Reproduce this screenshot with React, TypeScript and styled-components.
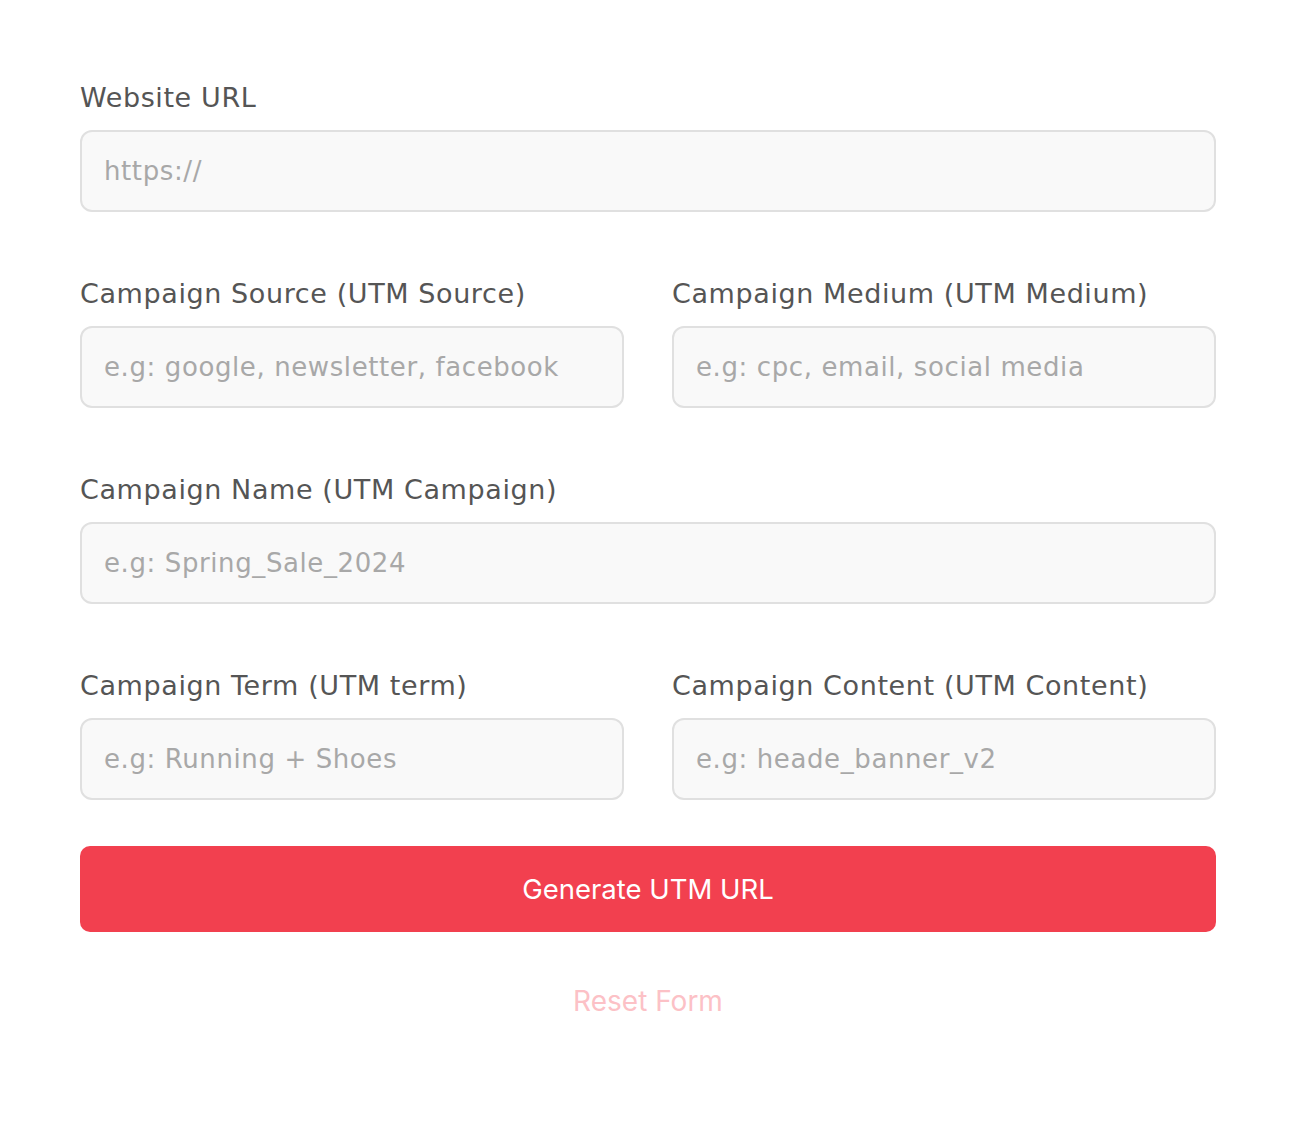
import React from 'react'
import styled, { createGlobalStyle } from 'styled-components'

const GlobalStyle = createGlobalStyle`
  html, body {
    margin: 0;
    padding: 0;
    background: #ffffff;
  }
  * {
    box-sizing: border-box;
  }
`

const Page = styled.main`
  padding: 82px 80px 80px;
  font-family: 'DejaVu Sans', 'Open Sans', sans-serif;
`

const Form = styled.form`
  display: flex;
  flex-direction: column;
  gap: 66px;
`

const Row = styled.div<{ $cols?: number }>`
  display: grid;
  grid-template-columns: repeat(${props => props.$cols || 1}, 1fr);
  column-gap: 48px;
`

const Field = styled.div`
  display: flex;
  flex-direction: column;
  gap: 16px;
`

const Label = styled.label`
  font-size: 27px;
  line-height: 32px;
  color: #555555;
  letter-spacing: 0.6px;
`

const Input = styled.input`
  height: 82px;
  padding: 0 22px;
  border: 2px solid #e0e0e0;
  border-radius: 12px;
  background: #f9f9f9;
  font-family: inherit;
  font-size: 26px;
  letter-spacing: 0.6px;
  color: #333;
  outline: none;

  &::placeholder {
    color: #a8a8a8;
  }
`

const Actions = styled.div`
  display: flex;
  flex-direction: column;
  align-items: center;
  margin-top: -20px;
`

const SubmitButton = styled.button`
  width: 100%;
  height: 86px;
  border: none;
  border-radius: 10px;
  background: #f2404f;
  color: #ffffff;
  font-family: 'Inter', sans-serif;
  font-size: 27.5px;
  cursor: pointer;
`

const ResetButton = styled.button`
  margin-top: 50px;
  border: none;
  background: none;
  color: #fcc1c6;
  font-family: 'Inter', sans-serif;
  font-size: 28px;
  line-height: 36px;
  cursor: pointer;
`

const App: React.FC = () => {
  return (
    <Page>
      <GlobalStyle />
      <Form onSubmit={e => e.preventDefault()}>
        <Row>
          <Field>
            <Label htmlFor='url'>Website URL</Label>
            <Input id='url' placeholder='https://' />
          </Field>
        </Row>

        <Row $cols={2}>
          <Field>
            <Label htmlFor='source'>Campaign Source (UTM Source)</Label>
            <Input id='source' placeholder='e.g: google, newsletter, facebook' />
          </Field>
          <Field>
            <Label htmlFor='medium'>Campaign Medium (UTM Medium)</Label>
            <Input id='medium' placeholder='e.g: cpc, email, social media' />
          </Field>
        </Row>

        <Row>
          <Field>
            <Label htmlFor='campaign'>Campaign Name (UTM Campaign)</Label>
            <Input id='campaign' placeholder='e.g: Spring_Sale_2024' />
          </Field>
        </Row>

        <Row $cols={2}>
          <Field>
            <Label htmlFor='term'>Campaign Term (UTM term)</Label>
            <Input id='term' placeholder='e.g: Running + Shoes' />
          </Field>
          <Field>
            <Label htmlFor='content'>Campaign Content (UTM Content)</Label>
            <Input id='content' placeholder='e.g: heade_banner_v2' />
          </Field>
        </Row>

        <Actions>
          <SubmitButton type='submit'>Generate UTM URL</SubmitButton>
          <ResetButton type='reset'>Reset Form</ResetButton>
        </Actions>
      </Form>
    </Page>
  )
}

export default App
